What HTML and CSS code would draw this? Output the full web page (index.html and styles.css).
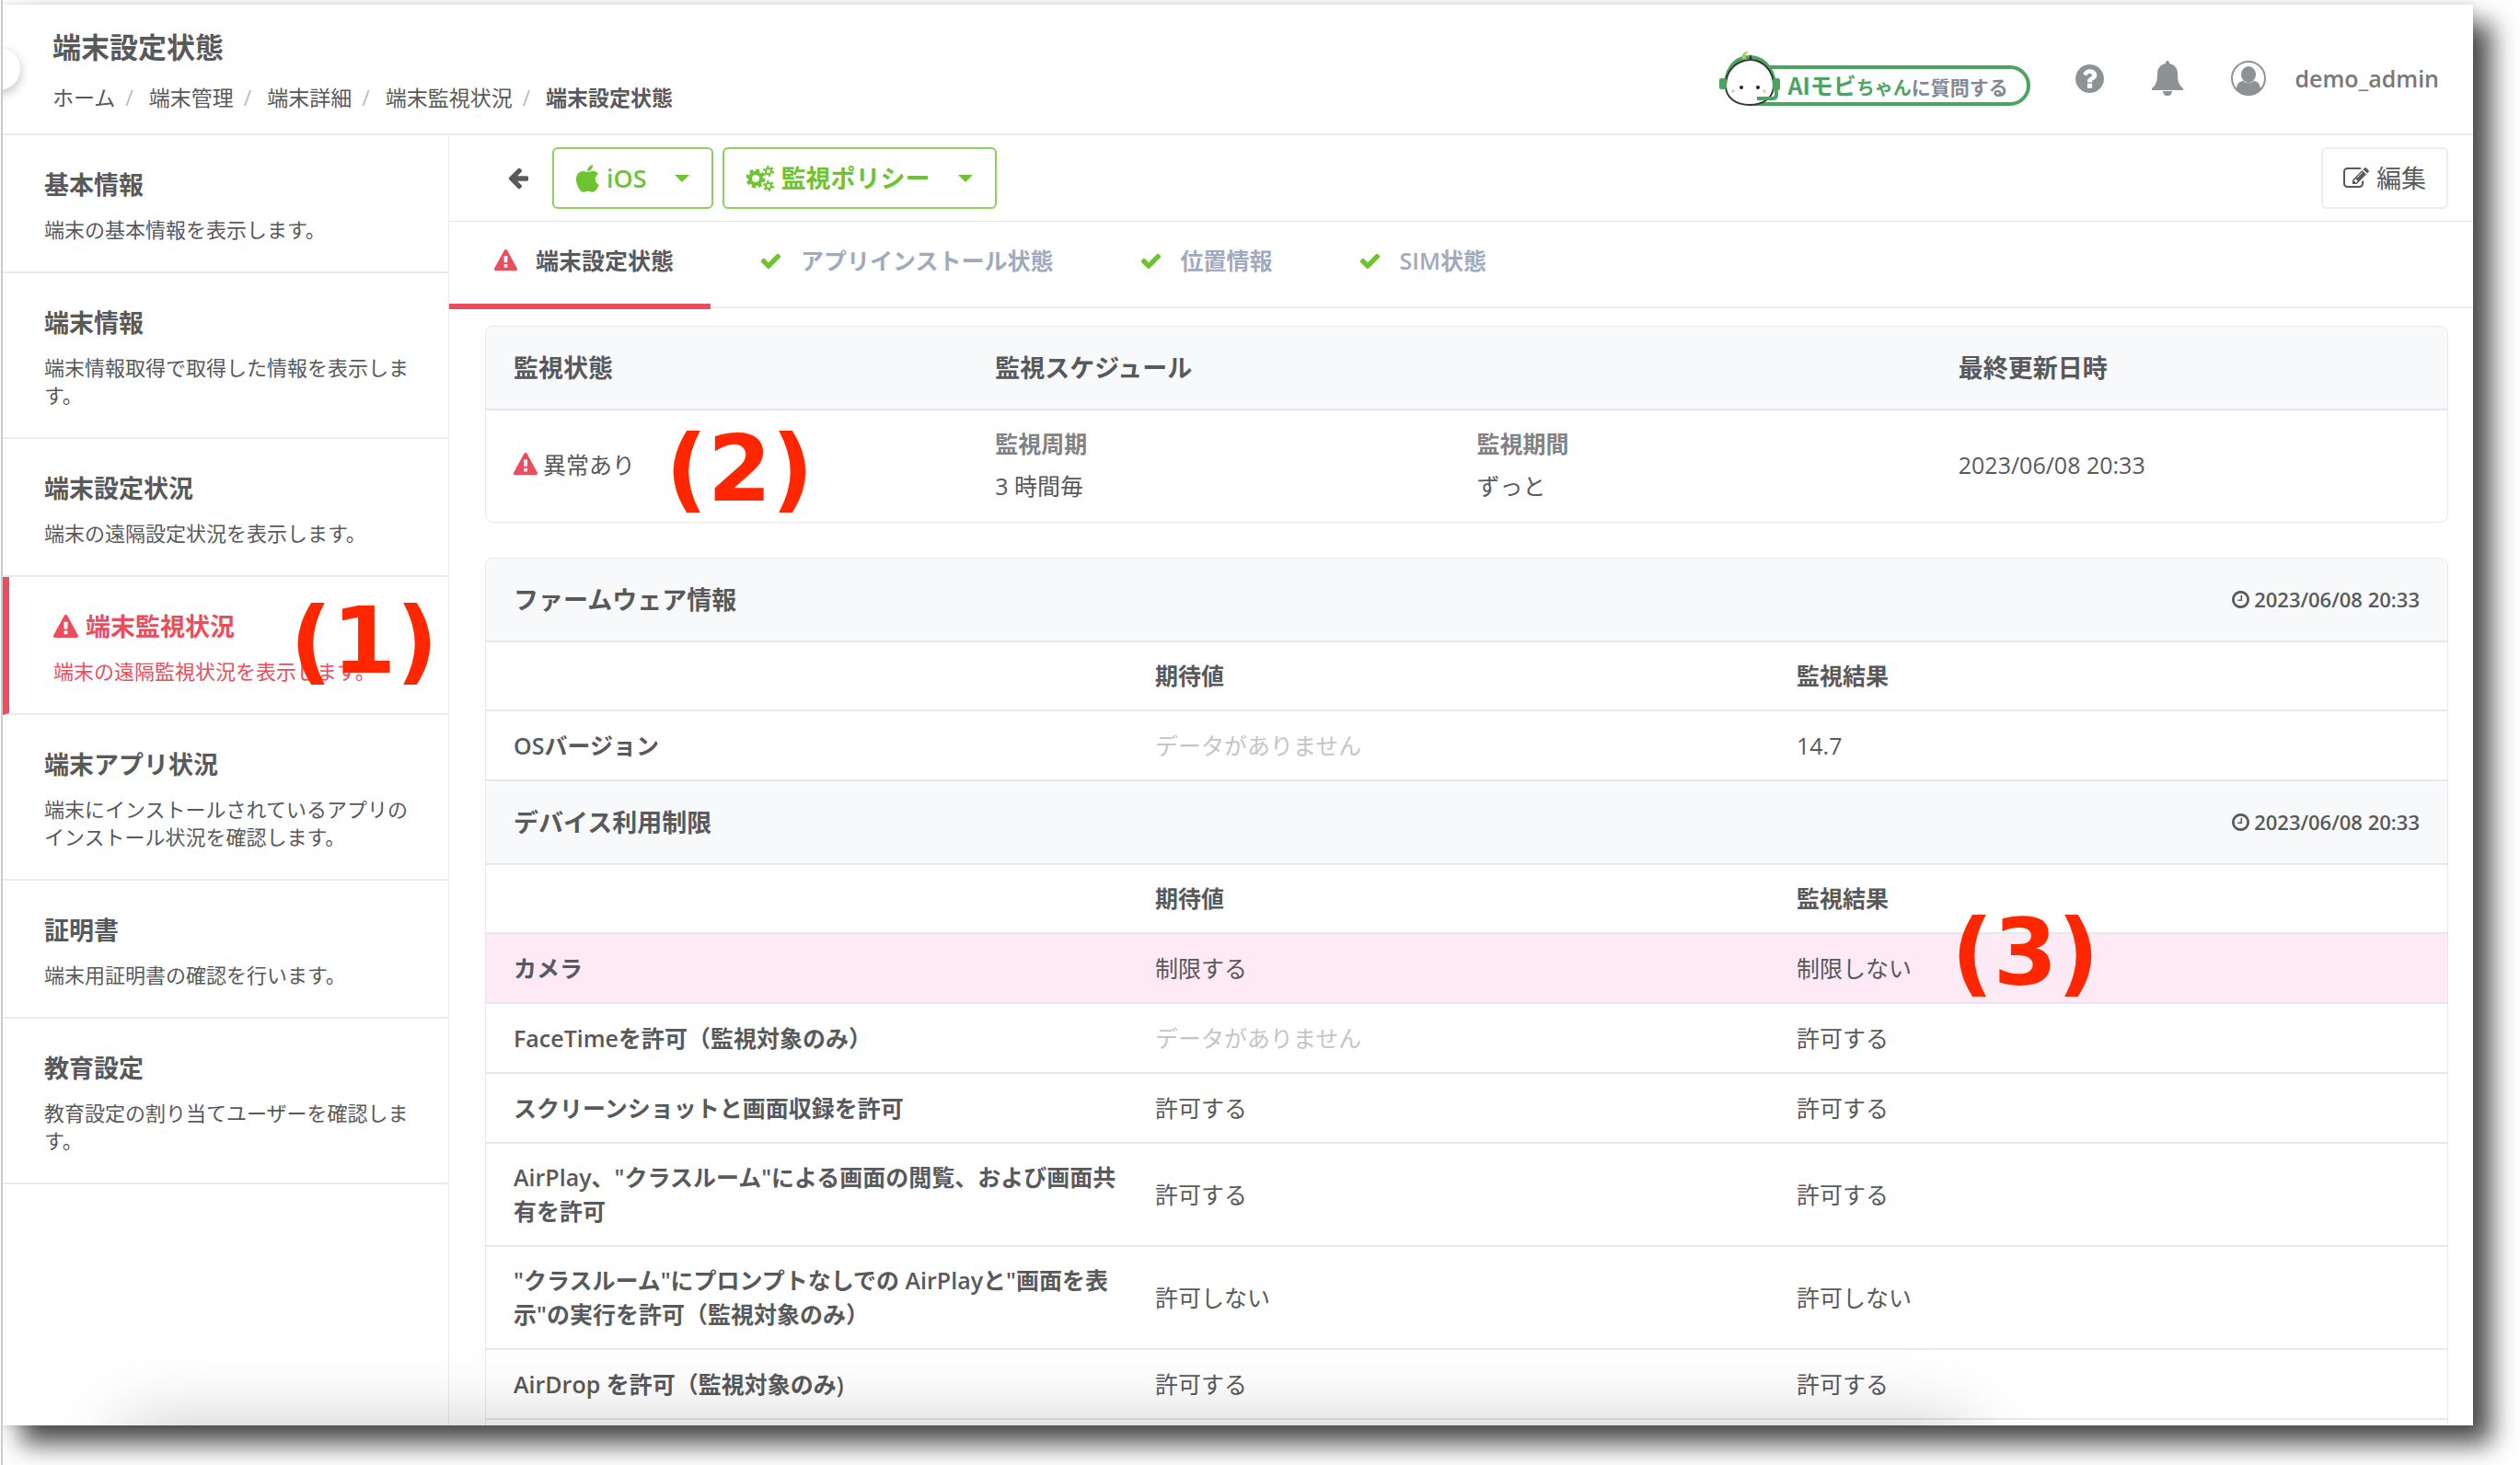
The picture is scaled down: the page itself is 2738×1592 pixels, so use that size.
FILE: index.html
```
<!DOCTYPE html>
<html lang="ja">
<head>
<meta charset="utf-8">
<title>端末設定状態</title>
<link rel="stylesheet" href="styles.css">
</head>
<body>

<svg class="defs" width="0" height="0">
  <symbol id="i-warn" viewBox="0 0 1792 1792"><path d="M1024 1375v-190q0-14-9.500-23.500t-22.500-9.500h-192q-13 0-22.500 9.500t-9.500 23.500v190q0 14 9.500 23.500t22.500 9.500h192q13 0 22.500-9.500t9.500-23.500zm-2-374l18-459q0-12-10-19-13-11-24-11h-220q-11 0-24 11-10 7-10 21l17 457q0 10 10 16.500t24 6.500h185q14 0 23.500-6.500t10.500-16.500zm-14-934l768 1408q35 63-2 126-17 29-46.500 46t-63.500 17h-1536q-34 0-63.500-17t-46.500-46q-37-63-2-126l768-1408q17-31 47-49t65-18 65 18 47 49z"/></symbol>
  <symbol id="i-check" viewBox="0 0 1792 1792"><path d="M1671 566q0 40-28 68l-724 724-136 136q-28 28-68 28t-68-28l-136-136-362-362q-28-28-28-68t28-68l136-136q28-28 68-28t68 28l294 295 656-657q28-28 68-28t68 28l136 136q28 28 28 68z"/></symbol>
  <symbol id="i-clock" viewBox="128 128 1536 1536"><path d="M1024 544v448q0 14-9 23t-23 9h-320q-14 0-23-9t-9-23v-64q0-14 9-23t23-9h224v-352q0-14 9-23t23-9h64q14 0 23 9t9 23zm416 352q0-148-73-273t-198-198-273-73-273 73-198 198-73 273 73 273 198 198 273 73 273-73 198-198 73-273zm224 0q0 209-103 385.500t-279.500 279.500-385.500 103-385.500-103-279.500-279.500-103-385.500 103-385.500 279.500-279.500 385.500-103 385.500 103 279.500 279.500 103 385.500z"/></symbol>
  <symbol id="i-caret" viewBox="0 0 16 8"><path d="M0 0h16l-8 8z"/></symbol>
</svg>

<div class="window">
  <header class="header">
    <button class="collapse" aria-label="メニュー"><svg viewBox="0 0 20 20"><path d="M13 3l-7 7 7 7"/></svg></button>
    <div class="header-title">
      <h1>端末設定状態</h1>
      <nav class="breadcrumb">
        <a href="#">ホーム</a><a href="#">端末管理</a><a href="#">端末詳細</a><a href="#">端末監視状況</a><b>端末設定状態</b>
      </nav>
    </div>
    <div class="header-tools">
      <button class="ask">
        <svg class="ask-face" viewBox="0 0 68 60">
          <path d="M8 34C10 14 22 6 34 6s24 8 27 28" fill="none" stroke="#4ba562" stroke-width="4"/>
          <path d="M34 9C19 10 8 21 8 37c0 14 12 21 26 21s26-7 26-21C60 21 49 10 36 9l-1-3z" fill="#fff" stroke="#333" stroke-width="2"/>
          <path d="M26 8c-1-6 2-8 7-8-3 2-4 4-3 8z" fill="#a5cf5c"/>
          <rect x="1" y="29" width="8" height="12" rx="2" fill="#4ba562"/>
          <rect x="59" y="29" width="8" height="13" rx="2" fill="#4ba562"/>
          <path d="M63 40v7q0 4-4 4H42" fill="none" stroke="#4ba562" stroke-width="4"/>
          <circle cx="25" cy="39" r="2" fill="#222"/><circle cx="43" cy="39" r="2" fill="#222"/>
          <circle cx="16" cy="43" r="2" fill="#f9c6c6"/><circle cx="50" cy="43" r="2" fill="#f9c6c6"/>
        </svg>
        <span class="ask-label"><span class="big">AIモビ</span><span class="small">ちゃん</span><span class="gray">に質問する</span></span>
      </button>
      <button class="tool" aria-label="ヘルプ"><svg class="ico-help" viewBox="128 128 1536 1536"><path d="M1024 1376v-192q0-14-9-23t-23-9h-192q-14 0-23 9t-9 23v192q0 14 9 23t23 9h192q14 0 23-9t9-23zm256-672q0-88-55.500-163t-138.500-116-170-41q-243 0-371 213-15 24 8 42l132 100q7 6 19 6 16 0 25-12 53-68 86-92 34-24 86-24 48 0 85.500 26t37.500 59q0 38-20 61t-68 45q-63 28-115.500 86.500t-52.500 125.500v36q0 14 9 23t23 9h192q14 0 23-9t9-23q0-19 21.500-49.500t54.500-49.500q32-18 49-28.500t46-35 44.500-48 28-60.500 12.500-81zm384 192q0 209-103 385.500t-279.500 279.500-385.500 103-385.500-103-279.500-279.500-103-385.500 103-385.500 279.500-279.500 385.500-103 385.500 103 279.500 279.500 103 385.500z"/></svg></button>
      <button class="tool" aria-label="通知"><svg class="ico-bell" viewBox="0 0 34 38"><path d="M17 0c2 0 2 2 2 3 6 1 9 6 9 11 0 8 1 12 6 16v2H0v-2c5-4 6-8 6-16 0-5 3-10 9-11 0-1 0-3 2-3zM12 33h10c0 7-10 7-10 0z"/></svg></button>
      <button class="user"><svg class="ico-user" viewBox="0 0 38 38"><circle cx="19" cy="19" r="18" fill="none" stroke="#8d9295" stroke-width="2"/><ellipse cx="19" cy="15" rx="8" ry="9"/><path d="M6 31c0-5 3-9 7-9 4 3 8 3 12 0 4 0 7 4 7 9-7 8-19 8-26 0z"/></svg><span>demo_admin</span></button>
    </div>
  </header>

  <div class="content">
    <aside class="side">
      <ul>
        <li><a href="#"><h2>基本情報</h2><p>端末の基本情報を表示します。</p></a></li>
        <li><a href="#"><h2>端末情報</h2><p>端末情報取得で取得した情報を表示します。</p></a></li>
        <li><a href="#"><h2>端末設定状況</h2><p>端末の遠隔設定状況を表示します。</p></a></li>
        <li class="active"><a href="#"><h2><svg class="warn"><use href="#i-warn"/></svg>端末監視状況</h2><p>端末の遠隔監視状況を表示します。</p></a><span class="mark mark-1">(1)</span></li>
        <li><a href="#"><h2>端末アプリ状況</h2><p>端末にインストールされているアプリのインストール状況を確認します。</p></a></li>
        <li><a href="#"><h2>証明書</h2><p>端末用証明書の確認を行います。</p></a></li>
        <li><a href="#"><h2>教育設定</h2><p>教育設定の割り当てユーザーを確認します。</p></a></li>
      </ul>
    </aside>

    <main class="main">
      <div class="toolbar">
        <button class="back" aria-label="戻る"><svg viewBox="64 128 1664 1664"><path d="M1664 896v128q0 53-32.500 90.500t-84.500 37.500h-704l293 294q38 36 38 90t-38 90l-75 76q-37 37-90 37-52 0-91-37l-651-652q-37-37-37-90 0-52 37-91l651-650q38-38 91-38 52 0 90 38l75 74q38 38 38 91t-38 91l-293 293h704q52 0 84.500 37.500t32.500 90.500z"/></svg></button>
        <button class="btn btn-green"><svg class="ico-apple" viewBox="195 0 1400 1664"><path d="M1585 1215q-39 125-123 250-129 196-257 196-49 0-140-32-86-32-151-32-61 0-142 33-81 34-132 34-152 0-301-259-147-261-147-503 0-228 113-374 113-144 284-144 72 0 177 30 104 30 138 30 45 0 143-34 102-34 173-34 119 0 213 65 52 36 104 100-79 67-114 118-65 94-65 207 0 124 69 223t158 126zm-376-1173q0 61-29 136-30 75-93 138-54 54-108 72-37 11-104 17 3-149 78-257 74-107 250-148 1 3 2.500 11t2.500 11q0 4 .5 10t.5 10z"/></svg><span>iOS</span><svg class="caret"><use href="#i-caret"/></svg></button>
        <button class="btn btn-green"><svg class="ico-gears" viewBox="0 0 30 28"><g fill="none" stroke="#6cc52f"><circle cx="10" cy="14" r="6" stroke-width="4"/><circle cx="10" cy="14" r="9" stroke-width="3" stroke-dasharray="4 3.070"/><circle cx="24" cy="6" r="3" stroke-width="2"/><circle cx="24" cy="6" r="5" stroke-width="2" stroke-dasharray="2.500 2.740"/><circle cx="24" cy="22" r="3" stroke-width="2"/><circle cx="24" cy="22" r="5" stroke-width="2" stroke-dasharray="2.500 2.740"/></g></svg><span>監視ポリシー</span><svg class="caret"><use href="#i-caret"/></svg></button>
        <button class="btn btn-edit"><svg class="ico-edit" viewBox="0 128 1792 1536"><path d="M888 1184l116-116-152-152-116 116v56h96v96h56zm440-720q-16-16-33 1l-350 350q-17 17-1 33t33-1l350-350q17-17 1-33zm80 594v190q0 119-84.500 203.500t-203.500 84.500h-832q-119 0-203.500-84.500t-84.500-203.500v-832q0-119 84.500-203.500t203.500-84.500h832q63 0 117 25 15 7 18 23 3 17-9 29l-49 49q-14 14-32 8-23-6-45-6h-832q-66 0-113 47t-47 113v832q0 66 47 113t113 47h832q66 0 113-47t47-113v-126q0-13 9-22l64-64q15-15 35-7t20 29zm-96-738l288 288-672 672h-288v-288zm444 132l-92 92-288-288 92-92q28-28 68-28t68 28l152 152q28 28 28 68t-28 68z"/></svg><span>編集</span></button>
      </div>

      <nav class="tabs">
        <a class="active" href="#"><svg class="warn"><use href="#i-warn"/></svg>端末設定状態</a>
        <a href="#"><svg class="check"><use href="#i-check"/></svg>アプリインストール状態</a>
        <a href="#"><svg class="check"><use href="#i-check"/></svg>位置情報</a>
        <a href="#"><svg class="check"><use href="#i-check"/></svg>SIM状態</a>
      </nav>

      <section class="card">
        <div class="card-head status-head">
          <h3>監視状態</h3>
          <h3 class="wide">監視スケジュール</h3>
          <h3>最終更新日時</h3>
        </div>
        <div class="status-body">
          <div><svg class="warn"><use href="#i-warn"/></svg>異常あり</div>
          <dl><dt>監視周期</dt><dd>3 時間毎</dd></dl>
          <dl><dt>監視期間</dt><dd>ずっと</dd></dl>
          <div>2023/06/08 20:33</div>
          <span class="mark mark-2">(2)</span>
        </div>
      </section>

      <section class="card">
        <div class="card-head">
          <h3>ファームウェア情報</h3>
          <time><svg><use href="#i-clock"/></svg>2023/06/08 20:33</time>
        </div>
        <table>
          <thead>
            <tr><th></th><th>期待値</th><th>監視結果</th></tr>
          </thead>
          <tbody>
            <tr><th>OSバージョン</th><td class="none">データがありません</td><td>14.7</td></tr>
          </tbody>
        </table>

        <div class="card-head">
          <h3>デバイス利用制限</h3>
          <time><svg><use href="#i-clock"/></svg>2023/06/08 20:33</time>
        </div>
        <table>
          <thead>
            <tr><th></th><th>期待値</th><th>監視結果</th></tr>
          </thead>
          <tbody>
            <tr class="error"><th>カメラ</th><td>制限する</td><td>制限しない<span class="mark mark-3">(3)</span></td></tr>
            <tr><th>FaceTimeを許可（監視対象のみ）</th><td class="none">データがありません</td><td>許可する</td></tr>
            <tr><th>スクリーンショットと画面収録を許可</th><td>許可する</td><td>許可する</td></tr>
            <tr><th>AirPlay、"クラスルーム"による画面の閲覧、および画面共有を許可</th><td>許可する</td><td>許可する</td></tr>
            <tr><th>"クラスルーム"にプロンプトなしでの AirPlayと"画面を表示"の実行を許可（監視対象のみ）</th><td>許可しない</td><td>許可しない</td></tr>
            <tr><th>AirDrop を許可（監視対象のみ)</th><td>許可する</td><td>許可する</td></tr>
            <tr><th></th><td></td><td></td></tr>
          </tbody>
        </table>
      </section>
    </main>
  </div>
</div>

</body>
</html>
```
FILE: styles.css
```
* {
  box-sizing: border-box;
}

body {
  margin: 0 0 0 1px;
  border-left: 2px solid #c9cacb;
  padding: 5px 51px 43px 0;
  height: 100vh;
  overflow: hidden;
  background: #fff;
  color: #58595b;
  font-family: "Open Sans", "Noto Sans CJK JP", sans-serif;
  font-size: 25px;
  line-height: 37px;
}

h1, h2, h3, p, ul, dl, dd {
  margin: 0;
  padding: 0;
}

h1, h2, h3, th, dt, b {
  font-weight: 600;
}

a {
  color: inherit;
  text-decoration: none;
}

button {
  border: 0;
  padding: 0;
  background: none;
  color: inherit;
  font: inherit;
  display: flex;
  align-items: center;
}

svg {
  fill: currentColor;
  flex: none;
}

.defs { position: absolute; }

.window {
  position: relative;
  display: flex;
  flex-direction: column;
  height: 100%;
  overflow: hidden;
  background: #fff;
  box-shadow: 20px 20px 26px rgba(0, 0, 0, .7), 0 0 8px rgba(0, 0, 0, .15);
  clip-path: inset(-5px -60px -60px 0);
}

/* soft shade along the bottom edge */
.window::after {
  content: "";
  position: absolute;
  left: 130px;
  right: 547px;
  bottom: -200px;
  height: 200px;
  box-shadow: 0 0 80px rgba(0, 0, 0, .22);
  pointer-events: none;
}

/* header */
.header {
  position: relative;
  display: flex;
  justify-content: space-between;
  flex: none;
  height: 142px;
  padding: 0 37px 0 54px;
  border-bottom: 2px solid #ebecee;
}

.collapse {
  position: absolute;
  left: -27px;
  top: 47px;
  width: 46px;
  height: 46px;
  border-radius: 50%;
  background: #fff;
  box-shadow: 0 4px 12px rgba(0, 0, 0, .25);
  justify-content: center;
}

.collapse svg {
  width: 20px;
  height: 20px;
  fill: none;
  stroke: #777;
  stroke-width: 3;
}

.header-title { padding-top: 26px; }

h1 {
  font-size: 31px;
  line-height: 40px;
}

.breadcrumb {
  display: flex;
  margin-top: 17px;
  font-size: 23px;
}

.breadcrumb a::after {
  content: "/";
  margin: 0 17px 0 11px;
  color: #b9bbbd;
}

.header-tools {
  display: flex;
  align-items: center;
  height: 160px;
  color: #8d9295;
}

.ask {
  position: relative;
  width: 321px;
  height: 44px;
  margin: 16px 49px 0 0;
  padding-left: 54px;
  border: 4px solid #4ba562;
  border-radius: 22px;
  background: #fff;
}

.ask-face {
  position: absolute;
  left: -22px;
  top: -19px;
  width: 68px;
  height: 60px;
}

.ask-label {
  color: #4ba562;
  font-family: "Noto Sans CJK JP", sans-serif;
  font-weight: 700;
  white-space: nowrap;
}

.ask-label .big { font-size: 25px; }
.ask-label .small { font-size: 20px; }
.ask-label .gray { font-size: 21px; color: #7f8995; }

.ico-help { width: 31px; height: 31px; }
.ico-bell { width: 34px; height: 38px; }
.ico-user { width: 38px; height: 38px; }

.tool { margin-right: 52px; }

.user {
  gap: 32px;
  font-weight: 600;
}

.user span { color: #77797b; }

/* side menu */
.content {
  display: flex;
  flex: 1;
  min-height: 0;
}

.side {
  flex: none;
  width: 485px;
  border-right: 1px solid #ebecee;
}

.side ul { list-style: none; }

.side li {
  position: relative;
  border-bottom: 2px solid #e9ebed;
}

.side a {
  display: block;
  padding: 35px 42px 31px 45px;
}

.side h2 {
  display: flex;
  align-items: center;
  gap: 8px;
  margin-bottom: 14px;
  font-size: 27px;
  line-height: 38px;
}

.side p {
  font-size: 22px;
  line-height: 30px;
}

.side .active {
  border-left: 7px solid #ed4c5c;
  color: #ed4c5c;
}

.side .active a { padding-left: 48px; }

.warn {
  width: 27px;
  height: 27px;
  color: #ed4c5c;
}

/* main */
.main {
  flex: 1;
  min-width: 0;
  overflow: hidden;
}

.toolbar {
  display: flex;
  align-items: center;
  gap: 10px;
  height: 94px;
  padding: 0 27px 0 63px;
  border-bottom: 1px solid #e3e7eb;
}

.back { margin-right: 15px; }

.back svg {
  width: 24px;
  height: 24px;
}

.btn {
  height: 67px;
  padding: 0 23px;
  border: 2px solid #ecedef;
  border-radius: 6px;
  font-size: 27px;
}

.btn-green {
  border-color: #8ad25a;
  padding: 0 24px;
  color: #6cc52f;
  font-weight: 600;
}

.btn span { margin-left: 8px; }

.btn-edit {
  margin-left: auto;
  padding: 0 22px;
}

.ico-apple { width: 25px; height: 30px; }
.ico-gears { width: 30px; height: 28px; }
.ico-edit { width: 28px; height: 24px; }

.caret {
  width: 16px;
  height: 8px;
  margin-left: 30px;
}

.tabs {
  display: flex;
  gap: 4px;
  height: 94px;
  border-bottom: 2px solid #ebecee;
  color: #a0aabf;
  font-weight: 600;
}

.tabs a {
  display: flex;
  align-items: center;
  height: 95px;
  padding: 0 40px 4px 45px;
  border-bottom: 6px solid transparent;
}

.tabs .active {
  border-color: #ed4c5c;
  color: #58595b;
}

.tabs svg {
  width: 25px;
  height: 25px;
  margin: 0 20px 0 4px;
}

.check { color: #6cc52f; }

.card {
  margin: 19px 27px 38px 39px;
  border: 1px solid #e6e9ec;
  border-radius: 8px;
}

.card-head {
  display: flex;
  align-items: center;
  justify-content: space-between;
  height: 91px;
  padding: 0 30px;
  border-bottom: 2px solid #e4e8ec;
  border-radius: 8px 8px 0 0;
  background: #f8f9fb;
}

h3 { font-size: 27px; }

time {
  display: flex;
  align-items: center;
  gap: 5px;
  font-size: 22px;
  font-weight: 600;
}

time svg {
  width: 19px;
  height: 19px;
}

.status-head,
.status-body {
  display: grid;
  grid-template-columns: repeat(4, 1fr);
  align-items: center;
  padding: 0 8px 0 30px;
}

.wide { grid-column: span 2; }

.status-body {
  position: relative;
  padding-top: 13px;
  padding-bottom: 16px;
}

.status-body div {
  display: flex;
  align-items: center;
  gap: 6px;
}

.status-body .warn {
  width: 26px;
  height: 26px;
}

dt, dd { line-height: 46px; }
dt { color: #808284; }

table {
  width: 100%;
  border-collapse: separate;
  border-spacing: 0;
  table-layout: fixed;
}

th, td {
  position: relative;
  width: 697px;
  padding: 18px 0;
  border-bottom: 2px solid #e6e9ec;
  text-align: left;
}

tbody th,
tbody td {
  height: 76px;
}

th:first-child {
  width: 727px;
  padding: 18px 32px 18px 30px;
}

th:last-child,
td:last-child {
  width: auto;
}

.error { background: #fdeaf5; }
.none { color: #c3c5c7; }

/* callout numbers */
.mark {
  position: absolute;
  color: #ff2600;
  font: bold 100px/100px "DejaVu Sans", sans-serif;
  white-space: nowrap;
}

.mark-1 { left: 305px; top: 20px; }
.mark-2 { left: 195px; top: 14px; }
.mark-3 { left: 168px; top: -29px; }
```
